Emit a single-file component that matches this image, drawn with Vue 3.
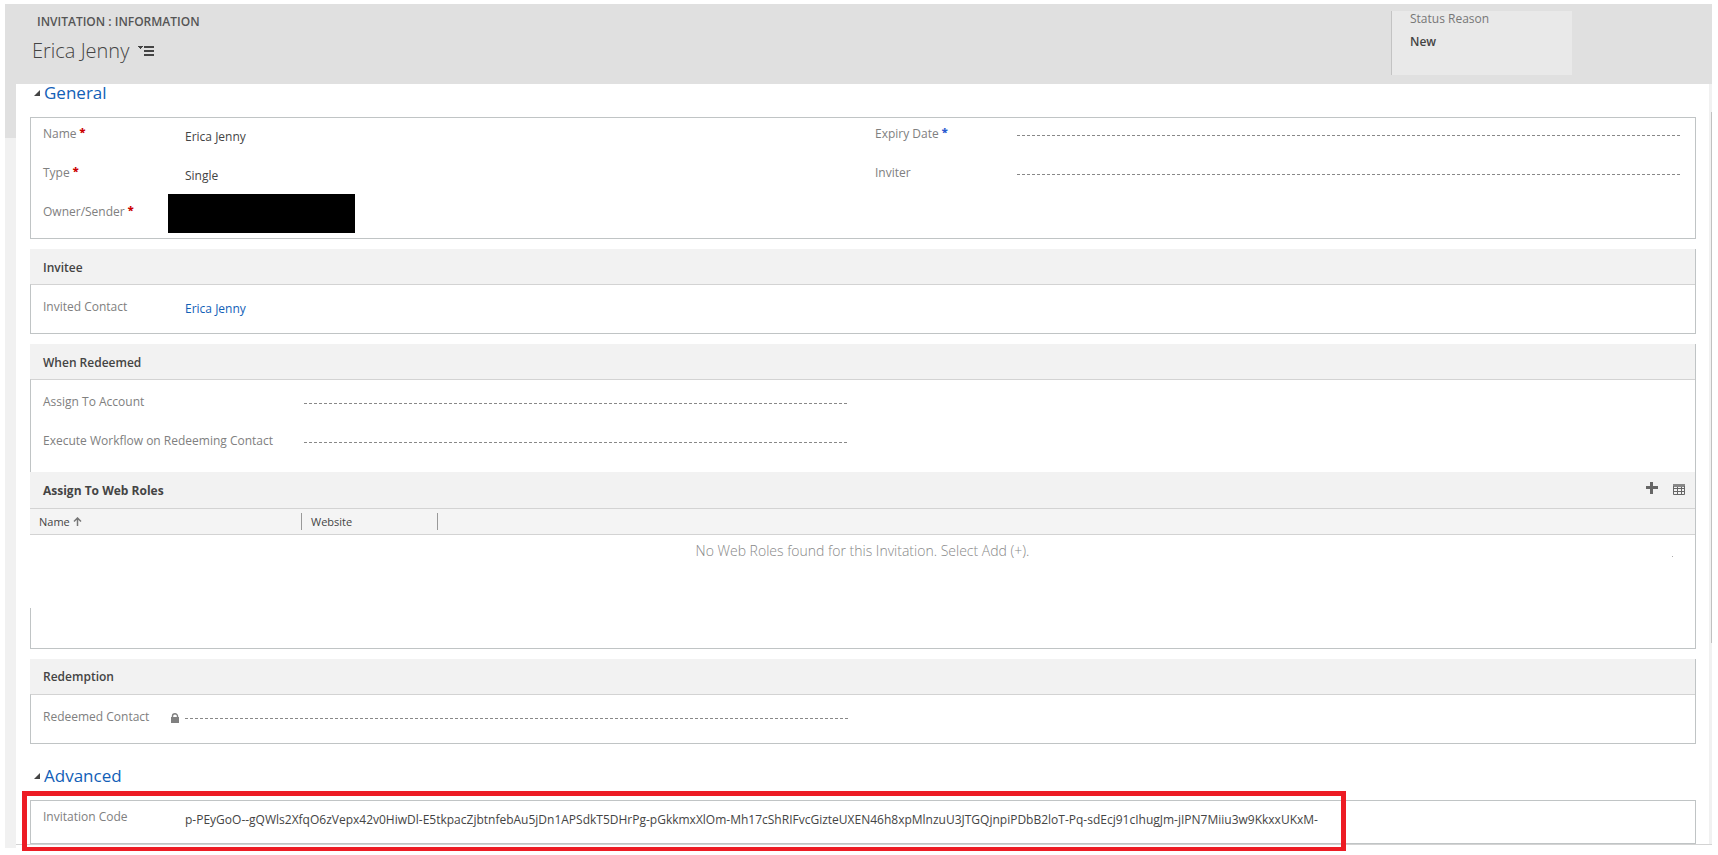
<script setup>
import { ref } from 'vue'

const generalOpen = ref(true)
const advancedOpen = ref(true)

const name = ref('Erica Jenny')
const type = ref('Single')
const owner = ref('')
const expiryDate = ref('')
const inviter = ref('')
const account = ref('')
const workflow = ref('')
const redeemedContact = ref('')
const invitationCode = ref(
  'p-PEyGoO--gQWls2XfqO6zVepx42v0HiwDl-E5tkpacZjbtnfebAu5jDn1APSdkT5DHrPg-pGkkmxXlOm-Mh17cShRIFvcGizteUXEN46h8xpMlnzuU3JTGQjnpiPDbB2loT-Pq-sdEcj91cIhugJm-jIPN7Miiu3w9KkxxUKxM-'
)
</script>

<template>
  <div class="page">
    <header class="header">
      <div class="heading">
        <p class="entity">INVITATION : INFORMATION</p>
        <div class="title-row">
          <h1 class="title">Erica Jenny</h1>
          <button class="icon-button" type="button" aria-label="Switch form">
            <svg width="17" height="10" viewBox="0 0 17 10" aria-hidden="true">
              <path d="M0 0h5v1H4v1H3v1H2V2H1V1H0z" fill="#444" />
              <path d="M6 0h10v2H6zM6 4h10v2H6zM6 8h10v2H6z" fill="#444" />
            </svg>
          </button>
        </div>
      </div>
      <div class="status">
        <span class="status-label">Status Reason</span>
        <span class="status-value">New</span>
      </div>
    </header>

    <div class="body">
      <div class="strip"></div>
      <main class="content">
        <h2 class="section-title">
          <button type="button" class="toggle" :aria-expanded="generalOpen" @click="generalOpen = !generalOpen">
            <svg width="6" height="6" viewBox="0 0 6 6" aria-hidden="true"><path d="M6 0v6H0z" fill="#444" /></svg>
            General
          </button>
        </h2>

        <div v-if="generalOpen" class="panels">
          <section class="panel full general">
            <div class="column">
              <div class="row">
                <label for="name">Name<span class="required">*</span></label>
                <input id="name" v-model="name" class="value" type="text" />
              </div>
              <div class="row">
                <label for="type">Type<span class="required">*</span></label>
                <input id="type" v-model="type" class="value" type="text" />
              </div>
              <div class="row">
                <label for="owner">Owner/Sender<span class="required">*</span></label>
                <input id="owner" v-model="owner" class="redacted" type="text" readonly />
              </div>
            </div>
            <div class="column">
              <div class="row">
                <label for="expiry">Expiry Date<span class="recommended">*</span></label>
                <input id="expiry" v-model="expiryDate" class="empty" type="text" />
              </div>
              <div class="row">
                <label for="inviter">Inviter</label>
                <input id="inviter" v-model="inviter" class="empty" type="text" />
              </div>
            </div>
          </section>

          <section class="panel">
            <h3 class="bar">Invitee</h3>
            <div class="fields">
              <div class="row">
                <span class="label">Invited Contact</span>
                <a class="value link" href="#contact">Erica Jenny</a>
              </div>
            </div>
          </section>

          <section class="panel">
            <h3 class="bar">When Redeemed</h3>
            <div class="fields wide">
              <div class="row half">
                <label for="account">Assign To Account</label>
                <input id="account" v-model="account" class="empty" type="text" />
              </div>
              <div class="row half">
                <label for="workflow">Execute Workflow on Redeeming Contact</label>
                <input id="workflow" v-model="workflow" class="empty" type="text" />
              </div>
            </div>
            <div class="bar roles-bar">
              <h3 class="bar-title">Assign To Web Roles</h3>
              <button class="icon-button" type="button" aria-label="Add web role">
                <svg width="12" height="12" viewBox="0 0 12 12" aria-hidden="true">
                  <path d="M4 0h3v4h5v3H7v5H4V7H0V4h4z" fill="#666" />
                </svg>
              </button>
              <button class="icon-button grid-button" type="button" aria-label="Open grid view">
                <svg width="12" height="11" viewBox="0 0 12 11" aria-hidden="true">
                  <path d="M0 0h12v3H0z" fill="#888" />
                  <path d="M.5 2v8.5h11V2M0 4.5h12M0 7.5h12M4.5 3v8M8.5 3v8" fill="none" stroke="#666" />
                </svg>
              </button>
            </div>
            <table class="roles">
              <thead>
                <tr>
                  <th class="col-name" scope="col">
                    Name
                    <svg width="9" height="9" viewBox="0 0 9 9" aria-hidden="true">
                      <path d="M4.5 9V1M1 4.5 4.5 1 8 4.5" fill="none" stroke="#777" stroke-width="1.5" />
                    </svg>
                  </th>
                  <th class="col-site" scope="col">Website</th>
                  <td></td>
                </tr>
              </thead>
              <tbody>
                <tr>
                  <td class="none" colspan="3">No Web Roles found for this Invitation. Select Add (+).</td>
                </tr>
              </tbody>
            </table>
            <div class="roles-footer"></div>
          </section>

          <section class="panel">
            <h3 class="bar">Redemption</h3>
            <div class="fields">
              <div class="row half">
                <label for="redeemed">Redeemed Contact</label>
                <svg class="lock" width="8" height="10" viewBox="0 0 8 10" aria-hidden="true">
                  <path d="M1.5 5V3a2.5 2.2 0 0 1 5 0v2" fill="none" stroke="#808080" stroke-width="1.4" />
                  <path d="M0 4h8v6H0z" fill="#808080" />
                </svg>
                <input id="redeemed" v-model="redeemedContact" class="empty" type="text" readonly />
              </div>
            </div>
          </section>
        </div>

        <h2 class="section-title advanced-title">
          <button type="button" class="toggle" :aria-expanded="advancedOpen" @click="advancedOpen = !advancedOpen">
            <svg width="6" height="6" viewBox="0 0 6 6" aria-hidden="true"><path d="M6 0v6H0z" fill="#444" /></svg>
            Advanced
          </button>
        </h2>

        <div v-if="advancedOpen" class="panels">
          <section class="panel full code">
            <div class="row">
              <label for="code">Invitation Code</label>
              <input id="code" v-model="invitationCode" class="value" type="text" readonly />
            </div>
            <div class="highlight"></div>
          </section>
        </div>
      </main>
      <div class="scrollbar"><div class="thumb"></div></div>
    </div>
  </div>
</template>

<style>
body {
  margin: 0;
  background: #fff;
}
</style>

<style scoped>
* {
  box-sizing: border-box;
}
.page {
  padding: 4px 6px 6px 5px;
  font-family: "Open Sans", "Noto Sans", sans-serif;
  font-size: 12px;
  line-height: 16px;
  color: #444;
}
.header {
  display: flex;
  justify-content: space-between;
  height: 80px;
  padding: 7px 140px 9px 27px;
  background: #e0e0e0;
}
.entity {
  margin: 3px 0 0 5px;
  font-weight: 600;
  color: #555;
}
.title-row {
  display: flex;
  align-items: center;
  gap: 9px;
  margin-top: 6px;
}
.title {
  margin: 0;
  font-size: 20px;
  line-height: 30px;
  font-weight: 300;
}
.icon-button {
  display: flex;
  padding: 0;
  border: 0;
  background: none;
}
.status {
  display: flex;
  flex-direction: column;
  width: 181px;
  padding-left: 18px;
  border-left: 1px solid #c3c3c3;
  background: #e9e9e9;
}
.status-label {
  color: #777;
}
.status-value {
  margin-top: 7px;
  font-weight: 600;
}
.body {
  display: flex;
}
.strip {
  width: 11px;
  margin-bottom: -3px;
  background: linear-gradient(#e0e0e0 54px, #f1f1f1 54px);
}
.content {
  flex: 1;
  min-width: 0;
  padding: 0 13px 0 14px;
  border-bottom: 1px solid #d3d3d3;
}
.scrollbar {
  display: flex;
  justify-content: flex-end;
  width: 3px;
  padding-top: 28px;
  background: #f1f1f1;
  border-bottom: 1px solid #d3d3d3;
}
.thumb {
  width: 1px;
  height: 531px;
  background: #c1c1c1;
}
.section-title {
  margin: 0;
  height: 33px;
  font-weight: 400;
}
.advanced-title {
  height: 56px;
  padding-top: 23px;
}
.toggle {
  display: flex;
  align-items: center;
  gap: 4px;
  padding: 0 0 0 4px;
  border: 0;
  background: none;
  font: inherit;
  font-size: 17px;
  line-height: 18px;
  color: #1160b7;
}
.panels {
  display: flex;
  flex-direction: column;
  gap: 10px;
}
.panel {
  position: relative;
  border-right: 1px solid #c0c4c5;
}
.full {
  border: 1px solid #c0c4c5;
}
.general {
  display: grid;
  grid-template-columns: 1fr 1fr;
  height: 122px;
}
.row {
  display: grid;
  grid-template-columns: 142px 1fr;
  align-items: start;
  height: 39px;
  padding: 8px 14px 0 12px;
}
.row label,
.label {
  display: flex;
  padding-top: 1px;
  color: #808080;
  white-space: nowrap;
}
.full label {
  padding-top: 0;
}
.required,
.recommended {
  margin-left: 3px;
  font-size: 11px;
  line-height: 12px;
  font-weight: 800;
  color: #c00;
}
.recommended {
  color: #2a5bd0;
}
input {
  display: block;
  width: 100%;
  min-width: 0;
  padding: 0;
  border: 0;
  background: none;
  font: inherit;
  color: #444;
}
.value {
  height: 16px;
  margin-top: 3px;
}
.link {
  color: #1160b7;
  text-decoration: none;
}
.empty {
  height: 21px;
  background: repeating-linear-gradient(90deg, #888 0 3px, transparent 3px 5px) 0 10px / 100% 1px no-repeat;
}
.full .empty {
  background-position: 0 9px;
}
.redacted {
  width: 187px;
  height: 39px;
  margin: -10px 0 0 -17px;
  background: #000;
}
.bar {
  display: flex;
  align-items: center;
  height: 35px;
  margin: 0;
  padding: 2px 0 0 13px;
  background: #f2f2f2;
  font-size: 12px;
  font-weight: 600;
}
.fields {
  height: 50px;
  padding-top: 5px;
  border: 1px solid #c0c4c5;
  border-top-color: #d3d3d3;
  border-right: 0;
}
.half {
  width: 50%;
}
.wide {
  height: 93px;
  border-bottom: 0;
}
.wide .row {
  grid-template-columns: 261px 1fr;
}
.roles-bar {
  height: 36px;
  gap: 15px;
  padding-right: 10px;
}
.roles-bar .icon-button {
  padding-bottom: 6px;
}
.roles-bar .grid-button {
  padding-bottom: 4px;
}
.bar-title {
  flex: 1;
  margin: 0;
  font-size: 12px;
}
.roles {
  width: 100%;
  table-layout: fixed;
  border-collapse: collapse;
}
.roles thead {
  height: 26px;
  background: #f4f4f4;
  border-top: 1px solid #d3d3d3;
  border-bottom: 1px solid #d3d3d3;
}
.roles th {
  padding: 0 0 0 9px;
  background: linear-gradient(#999, #999) right center / 1px 17px no-repeat;
  font-size: 11px;
  font-weight: 400;
  text-align: left;
}
.col-name {
  width: 272px;
}
.col-site {
  width: 136px;
}
.none {
  height: 73px;
  padding: 8px 0 0;
  background: linear-gradient(#aaa, #aaa) right 22px top 21px / 1px 1px no-repeat;
  vertical-align: top;
  text-align: center;
  font-size: 14px;
  font-weight: 300;
  color: #888;
}
.roles-footer {
  height: 41px;
  border: 1px solid #c0c4c5;
  border-top: 0;
  border-right: 0;
}
.lock {
  margin: 5px 0 0 -14px;
}
.row:has(.lock) {
  grid-template-columns: 142px 0 1fr;
}
.code {
  height: 44px;
}
.highlight {
  position: absolute;
  top: -10px;
  left: -9px;
  width: 1324px;
  height: 61px;
  max-width: 100%;
  border: 5px solid #ed1c24;
  pointer-events: none;
}
</style>
